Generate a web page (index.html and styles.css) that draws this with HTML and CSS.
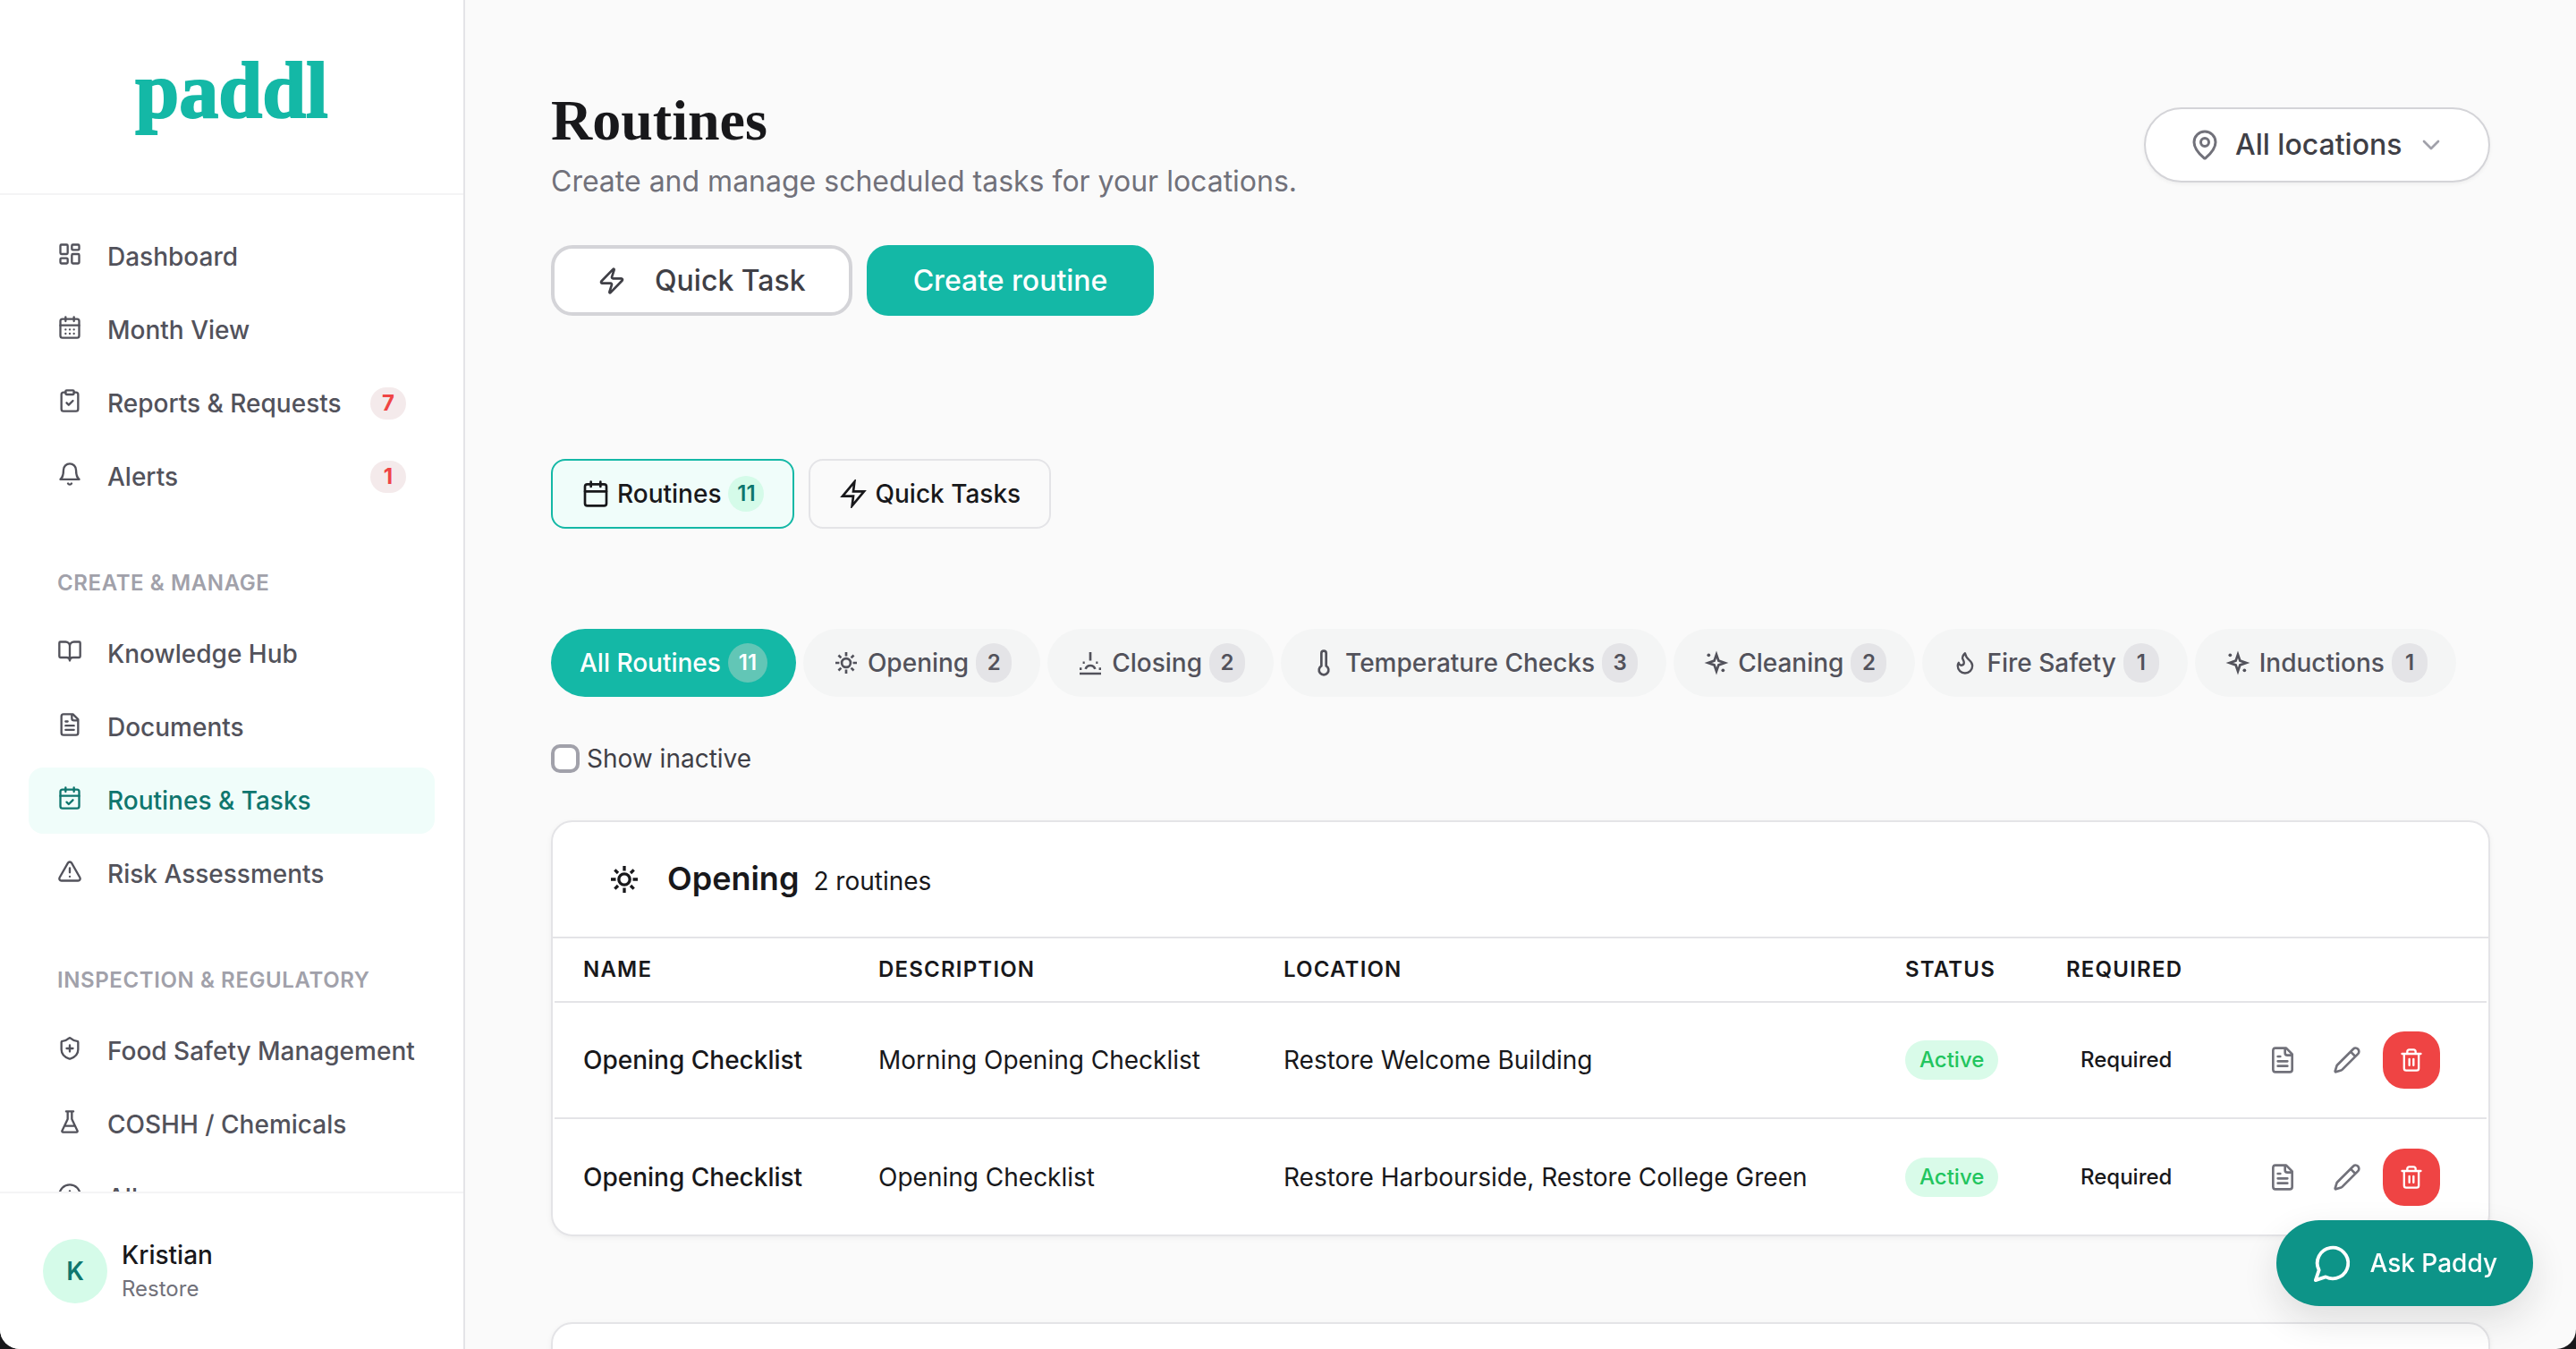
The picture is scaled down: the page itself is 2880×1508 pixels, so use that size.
FILE: index.html
```html
<!DOCTYPE html>
<html lang="en">
<head>
<meta charset="utf-8">
<title>Routines</title>
<link rel="stylesheet" href="styles.css">
</head>
<body>
<svg class="sprite" aria-hidden="true">
  <symbol id="i-dashboard" viewBox="0 0 24 24"><rect x="3" y="3" width="7" height="9" rx="1"/><rect x="14" y="3" width="7" height="5" rx="1"/><rect x="14" y="12" width="7" height="9" rx="1"/><rect x="3" y="16" width="7" height="5" rx="1"/></symbol>
  <symbol id="i-month" viewBox="0 0 24 24"><path d="M8 2v4M16 2v4M3 10h18M8 14h.01M12 14h.01M16 14h.01M8 18h.01M12 18h.01M16 18h.01"/><rect x="3" y="4" width="18" height="18" rx="2"/></symbol>
  <symbol id="i-clipboard" viewBox="0 0 24 24"><rect x="8" y="2" width="8" height="4" rx="1"/><path d="M16 4h2a2 2 0 0 1 2 2v14a2 2 0 0 1-2 2H6a2 2 0 0 1-2-2V6a2 2 0 0 1 2-2h2M9 14l2 2 4-4"/></symbol>
  <symbol id="i-bell" viewBox="0 0 24 24"><path d="M6 8a6 6 0 0 1 12 0c0 7 3 9 3 9H3s3-2 3-9M10.3 21a1.94 1.94 0 0 0 3.4 0"/></symbol>
  <symbol id="i-book" viewBox="0 0 24 24"><path d="M12 7v14M3 18a1 1 0 0 1-1-1V4a1 1 0 0 1 1-1h5a4 4 0 0 1 4 4 4 4 0 0 1 4-4h5a1 1 0 0 1 1 1v13a1 1 0 0 1-1 1h-6a3 3 0 0 0-3 3 3 3 0 0 0-3-3z"/></symbol>
  <symbol id="i-file" viewBox="0 0 24 24"><path d="M15 2H6a2 2 0 0 0-2 2v16a2 2 0 0 0 2 2h12a2 2 0 0 0 2-2V7ZM14 2v4a2 2 0 0 0 2 2h4M10 9H8M16 13H8M16 17H8"/></symbol>
  <symbol id="i-calcheck" viewBox="0 0 24 24"><path d="M8 2v4M16 2v4M3 10h18M9 16l2 2 4-4"/><rect x="3" y="4" width="18" height="18" rx="2"/></symbol>
  <symbol id="i-warning" viewBox="0 0 24 24"><path d="m21.73 18-8-14a2 2 0 0 0-3.48 0l-8 14A2 2 0 0 0 4 21h16a2 2 0 0 0 1.73-3M12 9v4M12 17h.01"/></symbol>
  <symbol id="i-shield" viewBox="0 0 24 24"><path d="M20 13c0 5-3.5 7.5-7.66 8.95a1 1 0 0 1-.67-.01C7.5 20.5 4 18 4 13V6a1 1 0 0 1 1-1c2 0 4.500-1.200 6.240-2.720a1.170 1.170 0 0 1 1.520 0C14.510 3.810 17 5 19 5a1 1 0 0 1 1 1zM9 12h6M12 9v6"/></symbol>
  <symbol id="i-flask" viewBox="0 0 24 24"><path d="M10 2v7.500L4.700 20.500a1 1 0 0 0 .9 1.500h12.800a1 1 0 0 0 .9-1.500L14 9.500V2M8.500 2h7M7 16h10"/></symbol>
  <symbol id="i-alert" viewBox="0 0 24 24"><circle cx="12" cy="12" r="10"/><path d="M12 8v4M12 16h.01"/></symbol>
  <symbol id="i-zap-round" viewBox="0 0 24 24"><path d="M4 14a1 1 0 0 1-.78-1.630l9.900-10.200a.5.5 0 0 1 .86.460l-1.920 6.020A1 1 0 0 0 13 10h7a1 1 0 0 1 .78 1.630l-9.900 10.200a.5.5 0 0 1-.86-.460l1.920-6.020A1 1 0 0 0 11 14z"/></symbol>
  <symbol id="i-zap" viewBox="0 0 24 24"><path stroke-linejoin="miter" d="M13 2 3 14h9l-1 8 10-12h-9z"/></symbol>
  <symbol id="i-pin" viewBox="0 0 24 24"><path d="M20 10c0 5-5.540 10.190-7.400 11.800a1 1 0 0 1-1.200 0C9.540 20.190 4 15 4 10a8 8 0 0 1 16 0"/><circle cx="12" cy="10" r="3"/></symbol>
  <symbol id="i-chevron" viewBox="0 0 24 24"><path d="m6 9 6 6 6-6"/></symbol>
  <symbol id="i-calendar" viewBox="0 0 24 24"><path d="M8 2v4M16 2v4M3 10h18"/><rect x="3" y="4" width="18" height="18" rx="2"/></symbol>
  <symbol id="i-sun" viewBox="0 0 24 24"><circle cx="12" cy="12" r="3.700"/><path stroke-linecap="butt" d="M12 3v3.300M12 17.700V21M3 12h3.300M17.700 12H21M5.600 5.600l2.200 2.200M16.200 16.200l2.200 2.200M5.600 18.400l2.200-2.200M16.200 7.800l2.200-2.200"/></symbol>
  <symbol id="i-sunset" viewBox="0 0 24 24"><path stroke-linecap="butt" d="M12 3v7.200M3 21h18M8 17.200a4.200 4.200 0 0 1 8 0M5.700 11.800h1.600M16.700 11.800h1.600M3 17h1.800M19.200 17H21"/></symbol>
  <symbol id="i-thermo" viewBox="0 0 24 24"><path d="M14 4v10.540a4 4 0 1 1-4 0V4a2 2 0 0 1 4 0Z"/></symbol>
  <symbol id="i-sparkle" viewBox="0 0 24 24"><path stroke-linejoin="miter" d="M12 5 13.800 10.200 19 12 13.800 13.800 12 19 10.200 13.800 5 12 10.200 10.200z"/><circle class="fill" cx="5.500" cy="5.500" r="1.400"/><circle class="fill" cx="17.500" cy="18.200" r="1.400"/></symbol>
  <symbol id="i-flame" viewBox="0 0 24 24"><path transform="translate(1.400 1.300) scale(.88)" d="M8.500 14.500A2.500 2.500 0 0 0 11 12c0-1.380-.5-2-1-3-1.072-2.143-.224-4.054 2-6 .5 2.500 2 4.900 4 6.500 2 1.600 3 3.500 3 5.500a7 7 0 1 1-14 0c0-1.153.433-2.294 1-3a2.500 2.500 0 0 0 2.500 2.500z"/></symbol>
  <symbol id="i-pencil" viewBox="0 0 24 24"><path d="M21.170 6.810a1 1 0 0 0-3.980-3.990L3.840 16.170a2 2 0 0 0-.5.830l-1.320 4.350a.5.5 0 0 0 .62.620l4.350-1.320a2 2 0 0 0 .83-.5zM15 5l4 4"/></symbol>
  <symbol id="i-trash" viewBox="0 0 24 24"><path d="M3 6h18M19 6v14a2 2 0 0 1-2 2H7a2 2 0 0 1-2-2V6M8 6V4a2 2 0 0 1 2-2h4a2 2 0 0 1 2 2v2M10 11v6M14 11v6"/></symbol>
  <symbol id="i-chat" viewBox="0 0 24 24"><path d="M7.900 20A9 9 0 1 0 4 16.100L2 22Z"/></symbol>
</svg>
<div class="app">
  <aside class="sidebar">
    <div class="brand">paddl</div>
    <nav class="nav">
      <ul>
        <li><a href="#"><svg class="icon"><use href="#i-dashboard"/></svg><span>Dashboard</span></a></li>
        <li><a href="#"><svg class="icon"><use href="#i-month"/></svg><span>Month View</span></a></li>
        <li><a href="#"><svg class="icon"><use href="#i-clipboard"/></svg><span>Reports &amp; Requests</span><b class="alert-count">7</b></a></li>
        <li><a href="#"><svg class="icon"><use href="#i-bell"/></svg><span>Alerts</span><b class="alert-count">1</b></a></li>
      </ul>
      <h2>CREATE &amp; MANAGE</h2>
      <ul>
        <li><a href="#"><svg class="icon"><use href="#i-book"/></svg><span>Knowledge Hub</span></a></li>
        <li><a href="#"><svg class="icon"><use href="#i-file"/></svg><span>Documents</span></a></li>
        <li><a href="#" class="current" aria-current="page"><svg class="icon"><use href="#i-calcheck"/></svg><span>Routines &amp; Tasks</span></a></li>
        <li><a href="#"><svg class="icon"><use href="#i-warning"/></svg><span>Risk Assessments</span></a></li>
      </ul>
      <h2>INSPECTION &amp; REGULATORY</h2>
      <ul>
        <li><a href="#"><svg class="icon"><use href="#i-shield"/></svg><span>Food Safety Management</span></a></li>
        <li><a href="#"><svg class="icon"><use href="#i-flask"/></svg><span>COSHH / Chemicals</span></a></li>
        <li><a href="#"><svg class="icon"><use href="#i-alert"/></svg><span>Allergens</span></a></li>
      </ul>
    </nav>
    <div class="account">
      <div class="avatar">K</div>
      <div>
        <div class="account-name">Kristian</div>
        <div class="account-org">Restore</div>
      </div>
    </div>
  </aside>

  <main class="main">
    <header class="page-head">
      <div>
        <h1>Routines</h1>
        <p>Create and manage scheduled tasks for your locations.</p>
      </div>
      <div class="location">
        <svg class="icon pin"><use href="#i-pin"/></svg>
        <select aria-label="Location"><option>All locations</option></select>
        <svg class="icon chevron"><use href="#i-chevron"/></svg>
      </div>
    </header>

    <div class="actions">
      <button type="button" class="btn btn-outline"><svg class="icon"><use href="#i-zap-round"/></svg>Quick Task</button>
      <button type="button" class="btn btn-primary">Create routine</button>
    </div>

    <div class="tabs">
      <button type="button" class="tab selected"><svg class="icon"><use href="#i-calendar"/></svg>Routines<span class="count">11</span></button>
      <button type="button" class="tab"><svg class="icon"><use href="#i-zap"/></svg>Quick Tasks</button>
    </div>

    <div class="filters">
      <button type="button" class="pill selected">All Routines<span class="count">11</span></button>
      <button type="button" class="pill"><svg class="icon"><use href="#i-sun"/></svg>Opening<span class="count">2</span></button>
      <button type="button" class="pill"><svg class="icon"><use href="#i-sunset"/></svg>Closing<span class="count">2</span></button>
      <button type="button" class="pill"><svg class="icon"><use href="#i-thermo"/></svg>Temperature Checks<span class="count">3</span></button>
      <button type="button" class="pill"><svg class="icon"><use href="#i-sparkle"/></svg>Cleaning<span class="count">2</span></button>
      <button type="button" class="pill"><svg class="icon"><use href="#i-flame"/></svg>Fire Safety<span class="count">1</span></button>
      <button type="button" class="pill"><svg class="icon"><use href="#i-sparkle"/></svg>Inductions<span class="count">1</span></button>
    </div>

    <label class="check"><input type="checkbox">Show inactive</label>

    <section class="card">
      <div class="card-head">
        <svg class="icon"><use href="#i-sun"/></svg>
        <div class="card-title"><h2>Opening</h2><span>2 routines</span></div>
      </div>
      <table>
        <colgroup><col class="c-name"><col class="c-desc"><col><col class="c-status"><col class="c-req"><col class="c-act"></colgroup>
        <thead>
          <tr><th>NAME</th><th>DESCRIPTION</th><th>LOCATION</th><th>STATUS</th><th>REQUIRED</th><th></th></tr>
        </thead>
        <tbody>
          <tr>
            <td class="name">Opening Checklist</td>
            <td>Morning Opening Checklist</td>
            <td>Restore Welcome Building</td>
            <td><span class="badge active">Active</span></td>
            <td><span class="badge">Required</span></td>
            <td><div class="row-actions">
              <button type="button" aria-label="View"><svg class="icon"><use href="#i-file"/></svg></button>
              <button type="button" aria-label="Edit"><svg class="icon"><use href="#i-pencil"/></svg></button>
              <button type="button" class="danger" aria-label="Delete"><svg class="icon"><use href="#i-trash"/></svg></button>
            </div></td>
          </tr>
          <tr>
            <td class="name">Opening Checklist</td>
            <td>Opening Checklist</td>
            <td>Restore Harbourside, Restore College Green</td>
            <td><span class="badge active">Active</span></td>
            <td><span class="badge">Required</span></td>
            <td><div class="row-actions">
              <button type="button" aria-label="View"><svg class="icon"><use href="#i-file"/></svg></button>
              <button type="button" aria-label="Edit"><svg class="icon"><use href="#i-pencil"/></svg></button>
              <button type="button" class="danger" aria-label="Delete"><svg class="icon"><use href="#i-trash"/></svg></button>
            </div></td>
          </tr>
        </tbody>
      </table>
    </section>
    <section class="card next"></section>
  </main>
  <button type="button" class="ask"><svg class="icon"><use href="#i-chat"/></svg>Ask Paddy</button>
</div>
</body>
</html>
```
FILE: styles.css
```css
* { box-sizing: border-box; }
html { background: #18181b; }
body {
  margin: 0;
  font-family: Inter, "Liberation Sans", sans-serif;
  font-size: 28px;
  line-height: 40px;
  color: #18181b;
}
h1, h2, p, ul { margin: 0; padding: 0; }
ul { list-style: none; }
button, select, input { font: inherit; color: inherit; margin: 0; }
button { cursor: pointer; }
.sprite { position: absolute; width: 0; height: 0; }
.icon {
  flex: none;
  width: 32px;
  height: 32px;
  fill: none;
  stroke: currentColor;
  stroke-width: 2;
  stroke-linecap: round;
  stroke-linejoin: round;
}
.fill { fill: currentColor; stroke: none; }

.app {
  display: grid;
  grid-template-columns: 520px minmax(0, 1fr);
  height: 100vh;
  overflow: hidden;
  background: #fafafa;
  border-radius: 0 0 22px 22px;
}

/* Sidebar */
.sidebar {
  display: flex;
  flex-direction: column;
  min-height: 0;
  background: #fff;
  border-right: 2px solid #e4e4e7;
}
.brand {
  flex: none;
  display: flex;
  align-items: center;
  justify-content: center;
  height: 218px;
  padding-bottom: 12px;
  border-bottom: 2px solid #f4f4f5;
  color: #14b8a6;
  font: bold 88px/100px "Liberation Serif", serif;
  -webkit-text-stroke: 2px #14b8a6;
}
.nav {
  flex: 1;
  min-height: 0;
  overflow: hidden;
  padding: 32px;
}
.nav ul { display: grid; gap: 8px; }
.nav h2 {
  padding: 65px 32px 25px;
  font-size: 24px;
  font-weight: 600;
  line-height: 34px;
  letter-spacing: .025em;
  color: #a1a1aa;
}
.nav a {
  display: flex;
  align-items: center;
  gap: 28px;
  height: 74px;
  padding: 0 32px;
  border-radius: 16px;
  color: #52525b;
  font-weight: 500;
  text-decoration: none;
  white-space: nowrap;
}
.nav .icon { width: 28px; height: 28px; margin-bottom: 6px; }
.nav a.current { background: #f0fdfa; color: #0f766e; }
.alert-count {
  margin-left: auto;
  padding: 0 12px;
  min-width: 40px;
  border-radius: 18px;
  background: #f4eaeb;
  color: #ef4444;
  font-size: 24px;
  font-weight: 700;
  line-height: 36px;
  text-align: center;
}
.account {
  flex: none;
  display: flex;
  align-items: center;
  gap: 16px;
  height: 176px;
  padding: 0 48px;
  border-top: 2px solid #f4f4f5;
}
.avatar {
  width: 72px;
  height: 72px;
  border-radius: 50%;
  background: #d5fbe9;
  color: #0f766e;
  font-weight: 600;
  line-height: 72px;
  text-align: center;
}
.account-name { font-weight: 500; }
.account-org { font-size: 24px; line-height: 36px; color: #71717a; }

/* Main column */
.main {
  display: flex;
  flex-direction: column;
  min-height: 0;
  overflow: hidden;
  padding: 96px 96px 0;
}
.main > * { flex: none; }
.page-head { display: flex; justify-content: space-between; align-items: center; }
h1 { font: bold 64px/78px "Liberation Serif", serif; }
.page-head p { margin-top: 4px; font-size: 32px; line-height: 50px; color: #71717a; }
.location {
  display: flex;
  align-items: center;
  gap: 16px;
  height: 84px;
  padding: 0 48px;
  border: 2px solid #d4d4d8;
  border-radius: 42px;
  background: #fff;
  color: #3f3f46;
  box-shadow: 0 2px 4px rgba(0, 0, 0, .05);
}
.location select {
  appearance: none;
  padding: 0;
  border: 0;
  background: none;
  font-size: 32px;
  font-weight: 500;
  line-height: 48px;
}
.pin { width: 36px; height: 36px; color: #71717a; }
.chevron { color: #a1a1aa; }

.actions { display: flex; gap: 16px; margin-top: 46px; }
.btn {
  display: flex;
  align-items: center;
  gap: 32px;
  height: 79px;
  padding: 0 52px;
  border: 0;
  border-radius: 24px;
  font-size: 32px;
  font-weight: 500;
}
.btn-outline { padding: 0 48px; border: 4px solid #d4d4d8; background: #fff; color: #3f3f46; }
.btn-primary { background: #14b8a6; color: #fff; }

.tabs { display: flex; gap: 16px; margin-top: 160px; }
.tab {
  display: flex;
  align-items: center;
  gap: 8px;
  height: 78px;
  padding: 0 32px;
  border: 2px solid #e4e4e7;
  border-radius: 16px;
  background: none;
  font-weight: 500;
}
.tab.selected { border-color: #14b8a6; background: #f0fdfa; }
.tab .count {
  min-width: 40px;
  border-radius: 20px;
  background: #d5fbe9;
  color: #0f766e;
  font-size: 24px;
  font-weight: 600;
}

.filters { display: flex; flex-wrap: wrap; gap: 8px; margin-top: 112px; }
.pill {
  display: flex;
  align-items: center;
  gap: 8px;
  height: 76px;
  padding: 0 32px;
  border: 0;
  border-radius: 38px;
  background: #f4f5f5;
  color: #52525b;
  font-weight: 500;
}
.pill .count {
  min-width: 40px;
  border-radius: 22px;
  background: #e4e4e7;
  font-size: 24px;
  font-weight: 600;
  line-height: 44px;
}
.pill.selected { background: #14b8a6; color: #fff; }
.pill.selected .count { min-width: 44px; background: #62c6b6; }

.check {
  display: flex;
  align-items: center;
  align-self: flex-start;
  gap: 8px;
  margin-top: 49px;
  color: #3f3f46;
}
.check input {
  appearance: none;
  width: 32px;
  height: 32px;
  border: 4px solid #a1a1aa;
  border-radius: 10px;
  background: #fff;
}

/* Routine groups */
.card {
  margin-top: 49px;
  border: 2px solid #e4e4e7;
  border-radius: 24px;
  background: #fff;
  box-shadow: 0 2px 6px rgba(0, 0, 0, .05);
}
.card.next { height: 464px; margin-top: 96px; }
.card-head {
  display: flex;
  align-items: center;
  gap: 28px;
  height: 130px;
  padding: 0 60px;
  border-bottom: 2px solid #e4e4e7;
}
.card-head .icon { width: 40px; height: 40px; }
.card-title { display: flex; align-items: baseline; gap: 16px; padding-bottom: 2px; }
.card-title h2 { font-size: 36px; font-weight: 600; line-height: 48px; }
table {
  width: calc(100% - 4px);
  margin: 0 2px;
  border-collapse: collapse;
  table-layout: fixed;
}
.c-name { width: 330px; }
.c-desc { width: 453px; }
.c-status { width: 180px; }
.c-req { width: 222px; }
.c-act { width: 280px; }
th {
  height: 71px;
  padding: 0 32px;
  font-size: 24px;
  font-weight: 600;
  line-height: 36px;
  letter-spacing: .05em;
  text-align: left;
}
td { height: 130px; padding: 0 32px; }
td:last-child { padding: 0 52px 0 0; }
tbody tr { border-top: 2px solid #e4e4e7; }
.name { font-weight: 500; }
.badge {
  display: inline-block;
  padding: 0 16px;
  border-radius: 22px;
  font-size: 24px;
  font-weight: 500;
  line-height: 44px;
}
.badge.active { background: #d9fbe9; color: #22c55e; }
.row-actions { display: flex; justify-content: flex-end; gap: 8px; }
.row-actions button {
  flex: none;
  display: flex;
  align-items: center;
  justify-content: center;
  width: 64px;
  height: 64px;
  padding: 0;
  border: 0;
  border-radius: 24px;
  background: none;
  color: #71717a;
}
.row-actions .danger { background: #ef4444; color: #fff; }
.danger .icon { width: 28px; height: 28px; }

.ask {
  position: fixed;
  right: 48px;
  bottom: 48px;
  display: flex;
  align-items: center;
  gap: 18px;
  height: 96px;
  padding: 0 40px;
  border: 0;
  border-radius: 48px;
  background: #0d9488;
  color: #fff;
  font-weight: 500;
  box-shadow: 0 16px 40px rgba(24, 24, 27, .12);
}
.ask .icon { width: 46px; height: 46px; }
```
